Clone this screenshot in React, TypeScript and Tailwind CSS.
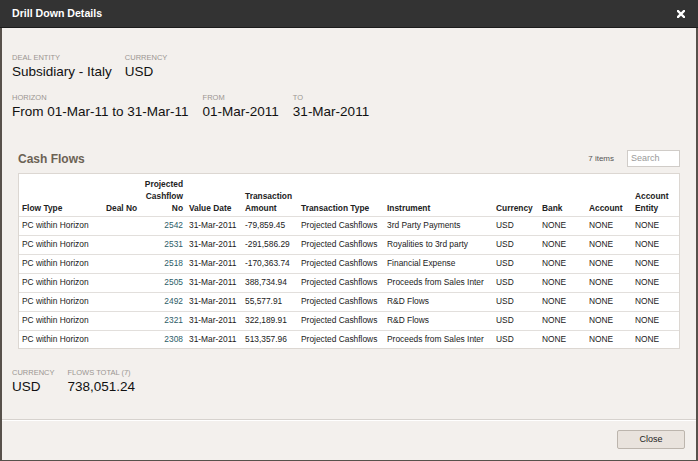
const rows = [
  { no: 2542, amount: '-79,859.45', instrument: '3rd Party Payments' },
  { no: 2531, amount: '-291,586.29', instrument: 'Royalities to 3rd party' },
  { no: 2518, amount: '-170,363.74', instrument: 'Financial Expense' },
  { no: 2505, amount: '388,734.94', instrument: 'Proceeds from Sales Inter' },
  { no: 2492, amount: '55,577.91', instrument: 'R&D Flows' },
  { no: 2321, amount: '322,189.91', instrument: 'R&D Flows' },
  { no: 2308, amount: '513,357.96', instrument: 'Proceeds from Sales Inter' },
];

const Field = ({ label, value }: { label: string; value: string }) => (
  <div className="flex flex-col">
    <span className="text-[7.5px] leading-[11px] uppercase text-[#9b9692]">{label}</span>
    <span className="text-[13.5px] leading-[17px] text-[#111]">{value}</span>
  </div>
);

export default function App() {
  return (
    <div className="w-[698px] h-[461px] flex flex-col bg-[#f3f0ed] font-['Liberation_Sans',Arial,sans-serif] overflow-hidden">
      {/* Title bar */}
      <div className="h-[28px] shrink-0 bg-[#333333] border-b border-[#1c1c1c] flex items-center justify-between pl-[12px] pr-[13px]">
        <span className="text-white font-bold text-[10.6px]">Drill Down Details</span>
        <svg width="8" height="8" viewBox="0 0 8 8">
          <path d="M1 1 L7 7 M7 1 L1 7" stroke="#fff" strokeWidth="2.4" strokeLinecap="square" />
        </svg>
      </div>

      <div className="flex-1 flex flex-col border-l-2 border-r-2 border-b border-[#57514b]">
        {/* Deal info */}
        <div className="pl-[10px] pt-[24px] flex flex-col gap-[12px]">
          <div className="flex gap-[13px]">
            <Field label="Deal Entity" value="Subsidiary - Italy" />
            <Field label="Currency" value="USD" />
          </div>
          <div className="flex gap-[14px]">
            <Field label="Horizon" value="From 01-Mar-11 to 31-Mar-11" />
            <Field label="From" value="01-Mar-2011" />
            <Field label="To" value="31-Mar-2011" />
          </div>
        </div>

        {/* Cash flows */}
        <div className="pl-[16px] pr-[16px] mt-[30px]">
          <div className="h-[17px] flex items-center justify-between">
            <span className="text-[12px] font-bold text-[#6b6254]">Cash Flows</span>
            <div className="flex items-center gap-[13px]">
              <span className="text-[8px] text-[#555]">7 items</span>
              <div className="w-[53px] h-[17px] bg-white border border-[#d0ccc8] flex items-center px-[3px] text-[9px] text-[#999]">
                Search
              </div>
            </div>
          </div>

          <div className="mt-[6px] bg-white border border-[#dcd7d2]">
            <table className="table-fixed w-[660px] text-[8.4px] text-[#1a1a1a]">
              <colgroup>
                <col className="w-[83px]" />
                <col className="w-[39px]" />
                <col className="w-[44px]" />
                <col className="w-[56px]" />
                <col className="w-[56px]" />
                <col className="w-[86px]" />
                <col className="w-[109px]" />
                <col className="w-[46px]" />
                <col className="w-[47px]" />
                <col className="w-[46px]" />
                <col className="w-[48px]" />
              </colgroup>
              <thead>
                <tr className="border-b border-[#e2dfdc] h-[42px] font-bold text-[#222] leading-[12px]">
                  <th className="align-bottom text-left pl-[3px] pb-[2px]">Flow Type</th>
                  <th className="align-bottom text-left pl-[4px] pb-[2px]">Deal No</th>
                  <th className="align-bottom text-right pr-[2px] pb-[2px]">
                    Projected
                    <br />
                    Cashflow
                    <br />
                    No
                  </th>
                  <th className="align-bottom text-left pl-[4px] pb-[2px]">Value Date</th>
                  <th className="align-bottom text-left pl-[4px] pb-[2px]">Transaction Amount</th>
                  <th className="align-bottom text-left pl-[4px] pb-[2px]">Transaction Type</th>
                  <th className="align-bottom text-left pl-[4px] pb-[2px]">Instrument</th>
                  <th className="align-bottom text-left pl-[4px] pb-[2px]">Currency</th>
                  <th className="align-bottom text-left pl-[4px] pb-[2px]">Bank</th>
                  <th className="align-bottom text-left pl-[4px] pb-[2px]">Account</th>
                  <th className="align-bottom text-left pl-[4px] pb-[2px]">Account Entity</th>
                </tr>
              </thead>
              <tbody>
                {rows.map((r, i) => (
                  <tr key={r.no} className={i < rows.length - 1 ? 'h-[19px] border-b border-[#e2dfdc]' : 'h-[18px]'}>
                    <td className="pl-[3px] whitespace-nowrap">PC within Horizon</td>
                    <td className="pl-[4px]"></td>
                    <td className="text-right pr-[2px] text-[#2c5d68]">{r.no}</td>
                    <td className="pl-[4px] whitespace-nowrap">31-Mar-2011</td>
                    <td className="pl-[4px] whitespace-nowrap">{r.amount}</td>
                    <td className="pl-[4px] whitespace-nowrap">Projected Cashflows</td>
                    <td className="pl-[4px] whitespace-nowrap">{r.instrument}</td>
                    <td className="pl-[4px]">USD</td>
                    <td className="pl-[4px]">NONE</td>
                    <td className="pl-[4px]">NONE</td>
                    <td className="pl-[4px]">NONE</td>
                  </tr>
                ))}
              </tbody>
            </table>
          </div>
        </div>

        {/* Totals */}
        <div className="pl-[10px] mt-[18px] flex gap-[13px]">
          <Field label="Currency" value="USD" />
          <Field label="Flows Total (7)" value="738,051.24" />
        </div>

        {/* Footer */}
        <div className="mt-auto">
          <div className="h-px bg-[#d6d2ce]" />
          <div className="h-px bg-white" />
          <div className="flex justify-end pt-[9px] pb-[11px] pr-[11px]">
            <button className="w-[68px] h-[19px] bg-[#e9e3dd] border border-[#bcb5ad] rounded-[2px] text-[9px] text-[#222]">
              Close
            </button>
          </div>
        </div>
      </div>
    </div>
  );
}
